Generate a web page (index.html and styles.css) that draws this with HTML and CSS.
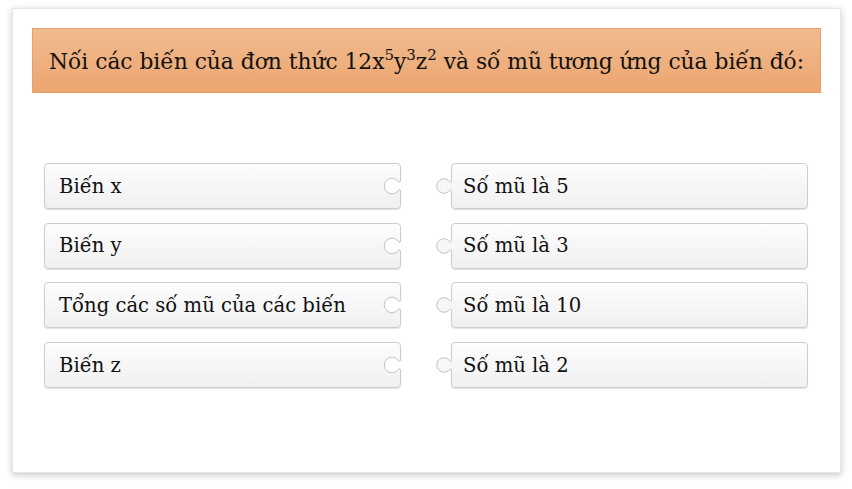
FILE: index.html
```html
<!DOCTYPE html>
<html lang="vi">
<head>
<meta charset="utf-8">
<title>Nối</title>
<link rel="stylesheet" href="styles.css">
</head>
<body>
<div class="card">
  <div class="title"><span class="title-text">Nối các biến của đơn thức 12x<sup>5</sup>y<sup>3</sup>z<sup>2</sup> và số mũ tương ứng của biến đó:</span></div>
  <div class="board">
    <div class="column">
      <div class="piece left">Biến x<svg class="notch" width="18" height="22" viewBox="0 0 18 22"><path d="M18,6 Q16.5,6.6 15.9,7.4 A7.8,7.8 0 1 0 15.9,14.6 Q16.5,15.4 18,16"/></svg></div>
      <div class="piece left">Biến y<svg class="notch" width="18" height="22" viewBox="0 0 18 22"><path d="M18,6 Q16.5,6.6 15.9,7.4 A7.8,7.8 0 1 0 15.9,14.6 Q16.5,15.4 18,16"/></svg></div>
      <div class="piece left">Tổng các số mũ của các biến<svg class="notch" width="18" height="22" viewBox="0 0 18 22"><path d="M18,6 Q16.5,6.6 15.9,7.4 A7.8,7.8 0 1 0 15.9,14.6 Q16.5,15.4 18,16"/></svg></div>
      <div class="piece left">Biến z<svg class="notch" width="18" height="22" viewBox="0 0 18 22"><path d="M18,6 Q16.5,6.6 15.9,7.4 A7.8,7.8 0 1 0 15.9,14.6 Q16.5,15.4 18,16"/></svg></div>
    </div>
    <div class="column">
      <div class="piece right"><svg class="knob" width="16" height="22" viewBox="0 0 16 22"><path d="M16,6 Q15,6.6 14.35,7.4 A7.3,7.3 0 1 0 14.35,14.6 Q15,15.4 16,16"/></svg>Số mũ là 5</div>
      <div class="piece right"><svg class="knob" width="16" height="22" viewBox="0 0 16 22"><path d="M16,6 Q15,6.6 14.35,7.4 A7.3,7.3 0 1 0 14.35,14.6 Q15,15.4 16,16"/></svg>Số mũ là 3</div>
      <div class="piece right"><svg class="knob" width="16" height="22" viewBox="0 0 16 22"><path d="M16,6 Q15,6.6 14.35,7.4 A7.3,7.3 0 1 0 14.35,14.6 Q15,15.4 16,16"/></svg>Số mũ là 10</div>
      <div class="piece right"><svg class="knob" width="16" height="22" viewBox="0 0 16 22"><path d="M16,6 Q15,6.6 14.35,7.4 A7.3,7.3 0 1 0 14.35,14.6 Q15,15.4 16,16"/></svg>Số mũ là 2</div>
    </div>
  </div>
</div>
</body>
</html>
```
FILE: styles.css
```css
html, body {
  margin: 0;
  padding: 0;
  background: #ffffff;
}
body {
  padding: 8px 11px 16px 12px;
  font-family: "DejaVu Serif", "Liberation Serif", serif;
  color: #111111;
}
.card {
  box-sizing: border-box;
  width: 829px;
  height: 465px;
  background: #ffffff;
  border: 1px solid #e6e6e6;
  box-shadow: 0 2px 7px rgba(0, 0, 0, 0.22);
  padding: 19px 19px 0 19px;
}
.title {
  box-sizing: border-box;
  height: 65px;
  border: 1px solid #e9a068;
  background: linear-gradient(#f0bb90, #eda56f);
  padding: 3px 0 0 16px;
  font-size: 21.75px;
  line-height: 60px;
  color: #111111;
  white-space: nowrap;
}
.title-text sup {
  font-size: 15px;
  line-height: 0;
  position: relative;
  top: -1px;
  vertical-align: super;
}
.board {
  display: flex;
  gap: 50px;
  padding: 70px 0 0 12px;
}
.column {
  display: flex;
  flex-direction: column;
  gap: 13.7px;
}
.piece {
  position: relative;
  box-sizing: border-box;
  width: 357px;
  height: 46px;
  border: 1px solid #cdcdcd;
  border-radius: 4px;
  background: linear-gradient(#fdfdfd, #f0f0f0);
  box-shadow: 0 1px 1px rgba(0, 0, 0, 0.12);
  display: flex;
  align-items: center;
  padding-left: 14px;
  font-size: 19.6px;
  color: #111111;
  white-space: nowrap;
}
.piece.right {
  padding-left: 11px;
}
.piece svg {
  position: absolute;
  top: 11px;
}
.piece svg path {
  stroke: #c2c2c2;
  stroke-width: 1;
}
.notch {
  right: -1px;
}
.notch path {
  fill: #ffffff;
}
.knob {
  left: -16px;
}
.knob path {
  fill: #f7f7f7;
}
```
